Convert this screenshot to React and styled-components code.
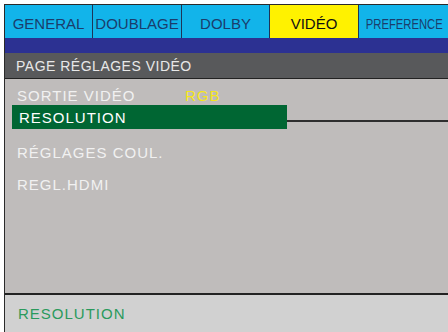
import styled, { createGlobalStyle } from "styled-components";

const GlobalStyle = createGlobalStyle`
  html, body {
    margin: 0;
    padding: 0;
    background: #ffffff;
    font-family: "Liberation Sans", Arial, sans-serif;
  }
`;

const tabs = [
  { label: "GENERAL", width: "88px" },
  { label: "DOUBLAGE", width: "89px" },
  { label: "DOLBY", width: "88px" },
  { label: "VIDÉO", width: "89px", active: true },
  { label: "PREFERENCE", width: "1fr", narrow: true },
];

const items = [
  { label: "SORTIE VIDÉO", value: "RGB" },
  { label: "RESOLUTION", selected: true },
  { label: "RÉGLAGES COUL." },
  { label: "REGL.HDMI" },
];

const App = () => {
  return (
    <>
      <GlobalStyle />
      <Frame>
        <TabBar $cols={tabs.map((t) => t.width).join(" ")}>
          {tabs.map((t) => (
            <Tab key={t.label} $active={t.active}>
              <TabLabel $narrow={t.narrow}>{t.label}</TabLabel>
            </Tab>
          ))}
        </TabBar>
        <Band />
        <PageHeader>PAGE RÉGLAGES VIDÉO</PageHeader>
        <Body>
          {items.map((item) =>
            item.selected ? (
              <SelectedRow key={item.label}>
                <Highlight>{item.label}</Highlight>
                <Connector />
              </SelectedRow>
            ) : (
              <Row key={item.label} $first={!!item.value}>
                <ItemLabel>{item.label}</ItemLabel>
                {item.value && <ItemValue>{item.value}</ItemValue>}
              </Row>
            )
          )}
        </Body>
        <Footer>RESOLUTION</Footer>
      </Frame>
    </>
  );
};

const Frame = styled.div`
  margin: 4px 0 0 4px;
  width: 444px;
  height: 328px;
  border-left: 1px solid #2a2a2a;
  border-top: 1px solid #2a2a2a;
  display: flex;
  flex-direction: column;
  overflow: hidden;
`;

const TabBar = styled.div`
  display: grid;
  grid-template-columns: ${(p) => p.$cols};
  height: 33px;
  background: #12b4ea;
`;

const Tab = styled.div`
  display: flex;
  align-items: center;
  justify-content: center;
  padding-top: 3px;
  box-sizing: border-box;
  border-right: 1px solid #1d3558;
  background: ${(p) => (p.$active ? "#fff200" : "#12b4ea")};
  color: ${(p) => (p.$active ? "#111111" : "#1b3d6c")};
  font-size: 15px;
  letter-spacing: 0;
  overflow: hidden;

  &:last-child {
    border-right: none;
  }
`;

const TabLabel = styled.span`
  display: inline-block;
  white-space: nowrap;
  transform: ${(p) => (p.$narrow ? "scaleX(0.75)" : "none")};
`;

const Band = styled.div`
  height: 15px;
  background: #2c3192;
`;

const PageHeader = styled.div`
  height: 26px;
  background: #58595b;
  border-bottom: 1px solid #222222;
  color: #e8e8e8;
  font-size: 14px;
  letter-spacing: 0.5px;
  display: flex;
  align-items: center;
  padding-left: 11px;
  padding-top: 1px;
  box-sizing: border-box;
`;

const Body = styled.div`
  height: 216px;
  background: #bfbcbb;
  border-bottom: 2px solid #222222;
  padding-top: 6px;
  box-sizing: border-box;
  display: flex;
  flex-direction: column;
`;

const Row = styled.div`
  display: flex;
  align-items: center;
  height: ${(p) => (p.$first ? "20px" : "32px")};
  padding-left: 12px;
  font-size: 15px;
  letter-spacing: 1px;
  &:nth-child(3) {
    margin-top: 7px;
  }
`;

const ItemLabel = styled.span`
  color: #f1f1f1;
  width: 168px;
`;

const ItemValue = styled.span`
  color: #f5e61a;
`;

const SelectedRow = styled.div`
  display: flex;
  align-items: flex-end;
  height: 24px;
`;

const Highlight = styled.div`
  margin-left: 7px;
  width: 275px;
  height: 24px;
  background: #006633;
  color: #ffffff;
  font-size: 15px;
  letter-spacing: 1px;
  display: flex;
  align-items: center;
  padding-left: 7px;
  box-sizing: border-box;
`;

const Connector = styled.div`
  flex: 1;
  height: 2px;
  margin-bottom: 7px;
  background: #2e2e2e;
`;

const Footer = styled.div`
  flex: 1;
  background: #d1d1d1;
  color: #2a9a5c;
  font-size: 15px;
  letter-spacing: 1px;
  display: flex;
  align-items: center;
  padding-left: 13px;
  padding-bottom: 2px;
`;

export default App;
